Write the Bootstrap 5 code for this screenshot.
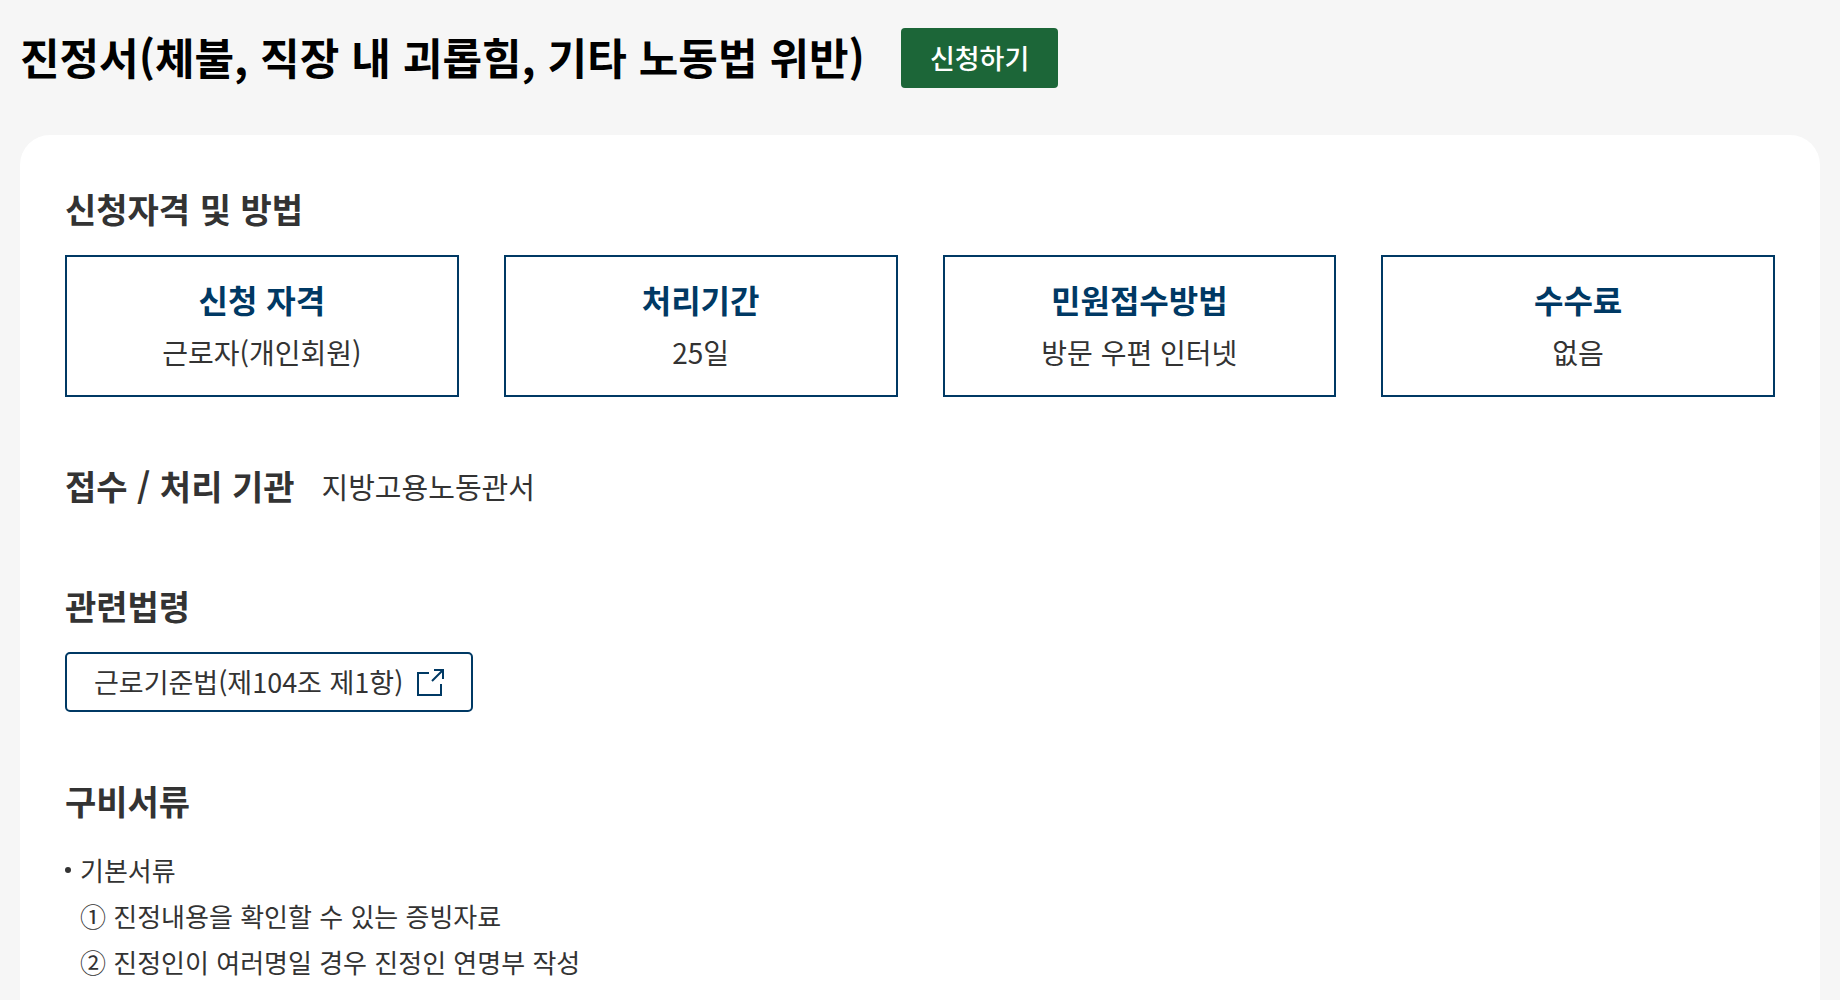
<!DOCTYPE html>
<html lang="ko">
<head>
<meta charset="utf-8">
<meta name="viewport" content="width=device-width, initial-scale=1">
<title>진정서(체불, 직장 내 괴롭힘, 기타 노동법 위반)</title>
<link href="https://cdn.jsdelivr.net/npm/bootstrap@5.3.0/dist/css/bootstrap.min.css" rel="stylesheet">
<style>
  body { background: #f6f6f6; color: #333; font-family: "Noto Sans CJK KR", "Noto Sans", sans-serif; font-size: 27px; line-height: 46px; }
  .page-wrap { padding: 28px 20px 0; min-height: 100vh; }
  .page-head { gap: 36px; margin-bottom: 47px; }
  .page-title { font-size: 43px; line-height: 56px; padding-bottom: 4px; font-weight: 700; color: #000; }
  .btn-apply { background: #1c6638; color: #fff; font-size: 27px; line-height: 40px; font-weight: 500; padding: 10px 29px; border: 0; border-radius: 4px; }
  .btn-apply:hover { background: #14502b; color: #fff; }
  .panel { background: #fff; border-radius: 30px 30px 0 0; padding: 45px; }
  .section-gap { gap: 60px; }
  .section-title { font-size: 34px; line-height: 58px; padding-bottom: 2px; font-weight: 700; margin: 0; }
  .section-title + * { margin-top: 15px; }
  .info-grid { gap: 45px; }
  .info-box { flex: 1 1 0; min-width: 240px; border: 2px solid #003964; padding: 17px 10px; line-height: 52px; text-align: center; }
  .info-box dt { font-size: 32px; line-height: 50px; padding-bottom: 2px; font-weight: 700; color: #003964; }
  .info-box dd { font-size: 28px; margin: 0; }
  .agency { gap: 27px; }
  .agency p { font-size: 29px; line-height: 58px; padding-bottom: 2px; margin: 0; }
  .law-link { gap: 14px; border: 2px solid #003964; border-radius: 5px; padding: 6px 27px; line-height: 44px; color: #333; text-decoration: none; }
  .law-link:hover { background: #f0f5f9; color: #003964; }
  .doc-list { font-size: 26px; }
  .doc-list > li { position: relative; padding-left: 15px; }
  .doc-list > li::before { content: ""; position: absolute; left: 0; top: 20px; width: 6px; height: 6px; border-radius: 50%; background: #333; }
</style>
</head>
<body>
<div class="page-wrap d-flex flex-column">
  <header class="page-head d-flex flex-wrap align-items-center">
    <h1 class="page-title mb-0">진정서(체불, 직장 내 괴롭힘, 기타 노동법 위반)</h1>
    <button type="button" class="btn btn-apply">신청하기</button>
  </header>
  <main class="panel flex-grow-1 d-flex flex-column section-gap">
    <section>
      <h2 class="section-title">신청자격 및 방법</h2>
      <div class="info-grid d-flex flex-wrap">
        <dl class="info-box mb-0"><dt>신청 자격</dt><dd>근로자(개인회원)</dd></dl>
        <dl class="info-box mb-0"><dt>처리기간</dt><dd>25일</dd></dl>
        <dl class="info-box mb-0"><dt>민원접수방법</dt><dd>방문 우편 인터넷</dd></dl>
        <dl class="info-box mb-0"><dt>수수료</dt><dd>없음</dd></dl>
      </div>
    </section>
    <section class="agency d-flex flex-wrap align-items-center">
      <h2 class="section-title">접수 / 처리 기관</h2>
      <p class="mt-0">지방고용노동관서</p>
    </section>
    <section>
      <h2 class="section-title">관련법령</h2>
      <div class="d-flex">
        <a href="#" class="law-link d-inline-flex align-items-center">근로기준법(제104조 제1항)
          <svg width="27" height="27" viewBox="0 0 27 27" fill="none" stroke="#003964" stroke-width="2" aria-hidden="true"><path d="M12 4H1v22h23V15M15 12 25 2M17 1h9v9"/></svg>
        </a>
      </div>
    </section>
    <section>
      <h2 class="section-title">구비서류</h2>
      <ul class="doc-list list-unstyled mb-0">
        <li>기본서류
          <ul class="list-unstyled">
            <li>① 진정내용을 확인할 수 있는 증빙자료</li>
            <li>② 진정인이 여러명일 경우 진정인 연명부 작성</li>
          </ul>
        </li>
      </ul>
    </section>
  </main>
</div>
<script src="https://cdn.jsdelivr.net/npm/bootstrap@5.3.0/dist/js/bootstrap.bundle.min.js"></script>
</body>
</html>
